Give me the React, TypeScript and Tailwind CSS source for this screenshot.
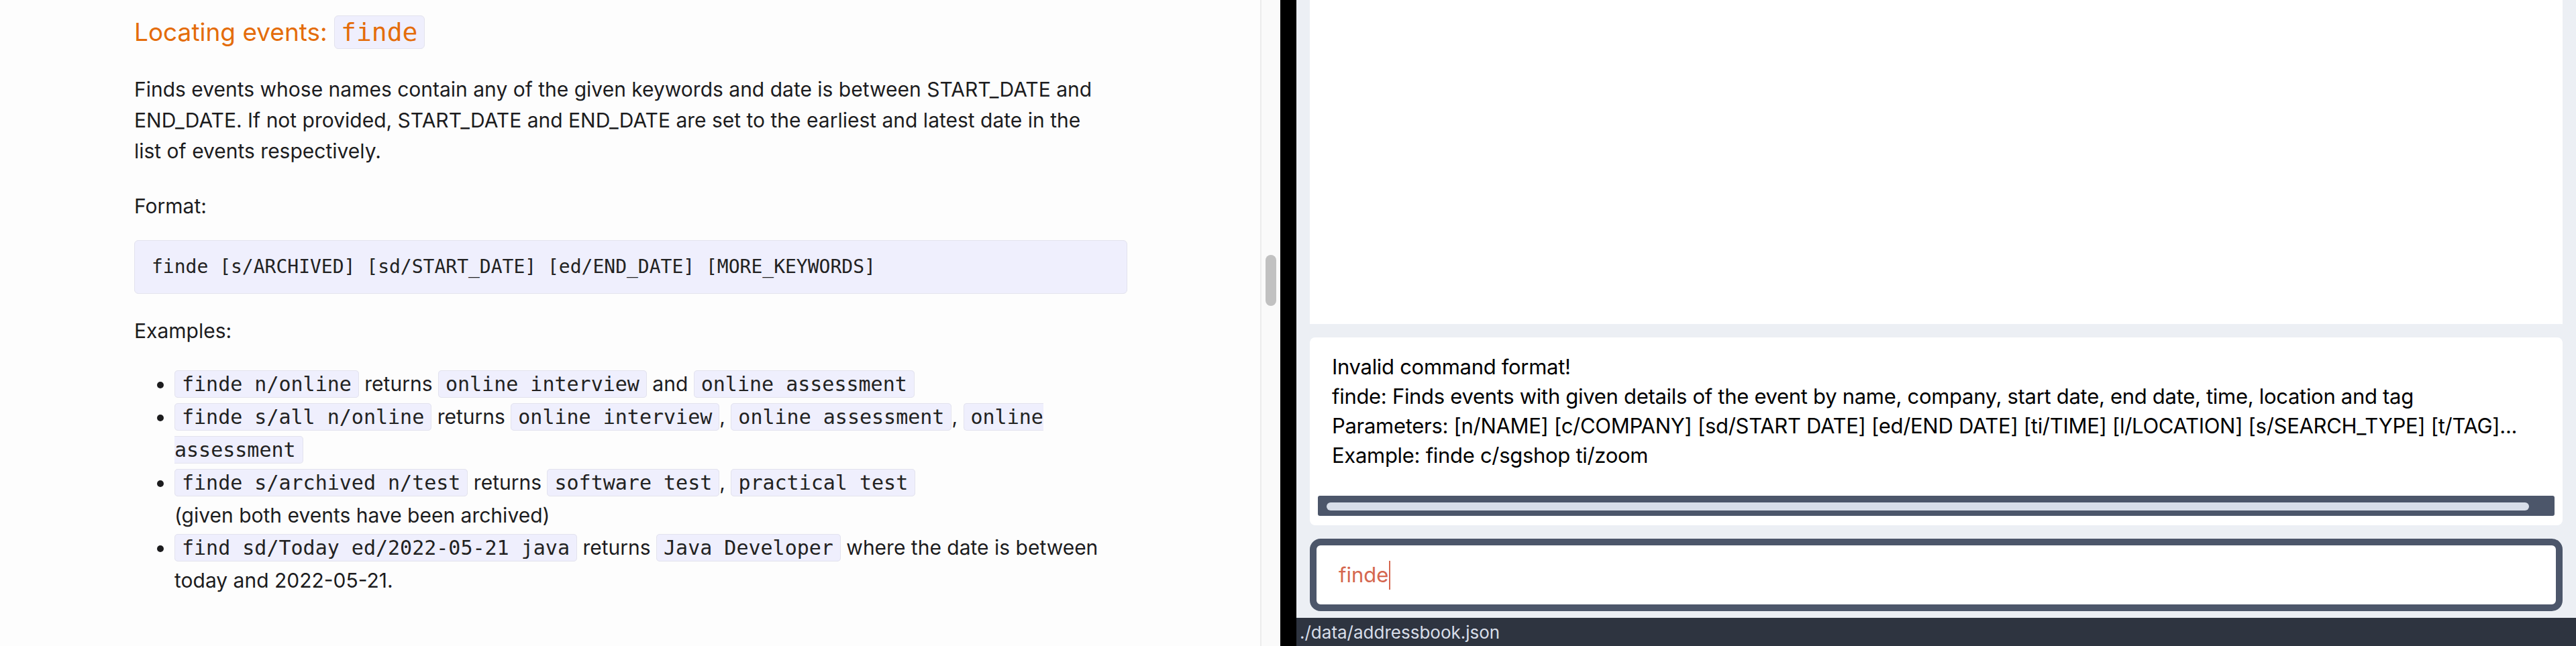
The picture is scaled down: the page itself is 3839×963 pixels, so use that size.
import React from "react";

function C({ children }: { children: React.ReactNode }) {
  return (
    <code className="rounded-[5px] border border-[#e3e3ee] bg-[#efeffd] px-[10px] py-[2px] font-['DejaVu_Sans_Mono',monospace] text-[30px] text-[#222] [box-decoration-break:slice]">
      {children}
    </code>
  );
}

export default function App() {
  return (
    <div className="flex h-[963px] w-[3839px] overflow-hidden font-['Inter',sans-serif]">
      {/* Left: documentation page */}
      <div className="flex h-full w-[1908px] bg-[#fdfdfd]">
        <div className="flex-1 pl-[200px] pt-[20px] text-[30px] text-[#1c1c1e]">
          <h3 className="text-[37px] font-normal leading-[56px] text-[#e46c0a]">
            Locating events:{" "}
            <code className="inline-block rounded-[6px] border border-[#e3e3ee] bg-[#efeffd] px-[9px] font-['DejaVu_Sans_Mono',monospace] text-[38px] leading-[48px]">
              finde
            </code>
          </h3>
          <p className="mt-[34px] leading-[46px]">
            Finds events whose names contain any of the given keywords and date is between START_DATE and
            <br />
            END_DATE. If not provided, START_DATE and END_DATE are set to the earliest and latest date in the
            <br />
            list of events respectively.
          </p>
          <p className="mt-[36px] leading-[46px]">Format:</p>
          <div className="mt-[28px] w-[1480px] rounded-[6px] border border-[#e3e3ee] bg-[#efeffd] px-[25px] py-[21px] font-['DejaVu_Sans_Mono',monospace] text-[28px] leading-[36px] text-[#222]">
            finde [s/ARCHIVED] [sd/START_DATE] [ed/END_DATE] [MORE_KEYWORDS]
          </div>
          <p className="mt-[32px] leading-[46px]">Examples:</p>
          <ul className="mt-[32px] list-disc pl-[60px] leading-[48px] whitespace-nowrap">
            <li>
              <C>finde n/online</C> returns <C>online interview</C> and <C>online assessment</C>
            </li>
            <li>
              <C>finde s/all n/online</C> returns <C>online interview</C>, <C>online assessment</C>,{" "}
              <C>
                online
                <br />
                assessment
              </C>
            </li>
            <li>
              <C>finde s/archived n/test</C> returns <C>software test</C>, <C>practical test</C>
              <br />
              (given both events have been archived)
            </li>
            <li>
              <C>find sd/Today ed/2022-05-21 java</C> returns <C>Java Developer</C> where the date is between
              <br />
              today and 2022-05-21.
            </li>
          </ul>
        </div>
        <div className="h-full w-[30px] border-l-2 border-[#ececec] bg-[#fafafa] pl-[6px] pt-[380px]">
          <div className="h-[76px] w-[16px] rounded-full bg-[#c1c1c1]" />
        </div>
      </div>

      {/* Divider */}
      <div className="h-full w-[24px] bg-black" />

      {/* Right: app window */}
      <div className="flex h-full flex-1 flex-col bg-[#eceff4]">
        <div className="flex flex-col px-[20px]">
          <div className="h-[483px] bg-white" />
          <div className="mt-[20px] flex h-[280px] flex-col rounded-[8px] bg-white">
            <div className="flex-1 whitespace-nowrap pl-[33px] pt-[22px] text-[31px] leading-[44px] tracking-[-0.3px] text-black">
              <div>Invalid command format!</div>
              <div>
                finde: Finds events with given details of the event by name, company, start date, end date, time, location and tag
              </div>
              <div>
                Parameters: [n/NAME] [c/COMPANY] [sd/START DATE] [ed/END DATE] [ti/TIME] [l/LOCATION] [s/SEARCH_TYPE] [t/TAG]...
              </div>
              <div>Example: finde c/sgshop ti/zoom</div>
            </div>
            <div className="mx-[12px] mb-[14px] h-[30px] rounded-[3px] bg-[#4c566a] pl-[13px] pr-[38px] pt-[10px]">
              <div className="h-[12px] rounded-full bg-[#d8dee9]" />
            </div>
          </div>
          <div className="mt-[20px] flex h-[108px] items-center rounded-[16px] border-[10px] border-[#4c566a] bg-white pl-[33px]">
            <span className="text-[31px] leading-[40px] text-[#d5674f]">finde</span>
            <span className="ml-[1px] h-[43px] w-[2px] bg-[#d5674f]" />
          </div>
        </div>
        <div className="mt-[10px] h-[42px] bg-[#2e3440] pl-[5px] pt-[4px] text-[26px] leading-[36px] text-[#d8dee9]">
          ./data/addressbook.json
        </div>
      </div>
    </div>
  );
}
